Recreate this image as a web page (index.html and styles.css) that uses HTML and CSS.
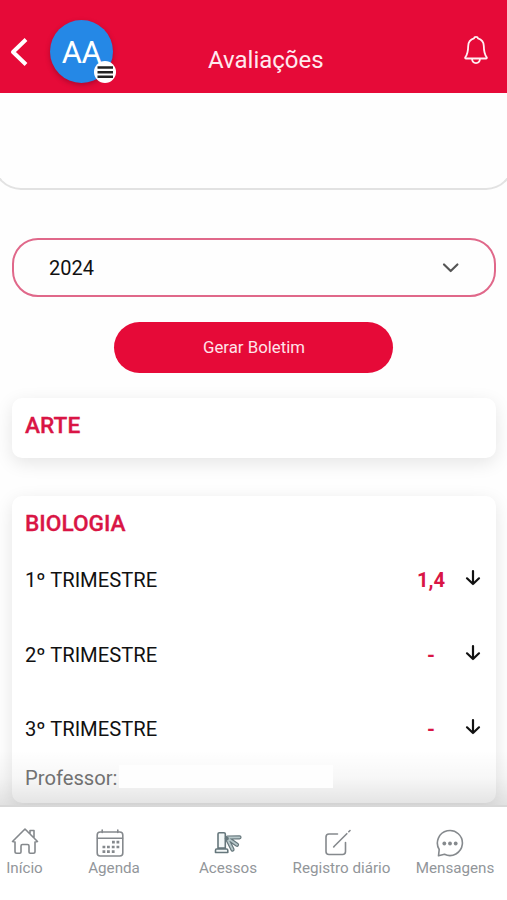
FILE: index.html
```html
<!DOCTYPE html>
<html lang="pt-BR">
<head>
<meta charset="utf-8">
<meta name="viewport" content="width=device-width, initial-scale=1">
<title>Avaliações</title>
<link rel="stylesheet" href="styles.css">
</head>
<body>
<div class="app">
  <header class="header">
    <svg class="back" width="20" height="32" viewBox="0 0 20 32"><path d="M18 3.500L5 16L18 28.500"/></svg>
    <div class="avatar">AA
      <svg class="menu" width="22" height="22" viewBox="0 0 22 22"><circle cx="11" cy="11" r="11"/><path d="M3.500 6.500h15.500M3.500 11.200h15.500M3.500 15.800h15.500"/></svg>
    </div>
    <h1 class="title">Avaliações</h1>
    <svg class="bell" width="26" height="30" viewBox="0 0 26 30"><path d="M13 1.800C11.900 1.800 11.100 2.500 11 3.400C7.500 4.400 5.300 7.300 5.200 11C5.100 17 4.400 19.600 2.300 22.200C1.800 22.900 2.200 23.500 3 23.500H23C23.800 23.500 24.200 22.900 23.700 22.200C21.600 19.600 20.900 17 20.800 11C20.700 7.300 18.500 4.400 15 3.400C14.900 2.500 14.100 1.800 13 1.800ZM9 23.800C9.300 29.500 16.700 29.500 17 23.800"/></svg>
  </header>
  <main class="content">
    <section class="student"></section>
    <div class="select">
      <span>2024</span>
      <svg width="18" height="12" viewBox="0 0 18 12"><path d="M3 2.500L9.700 9L16.400 2.500"/></svg>
    </div>
    <button class="report">Gerar Boletim</button>
    <section class="card card-short"><h2>ARTE</h2></section>
    <section class="card card-long">
      <h2>BIOLOGIA</h2>
      <div class="term"><span>1º TRIMESTRE</span><b>1,4</b><svg width="16" height="18" viewBox="0 0 16 18"><path d="M8 2V15M2 9.300L8 15L14 9.300"/></svg></div>
      <div class="term"><span>2º TRIMESTRE</span><b>-</b><svg width="16" height="18" viewBox="0 0 16 18"><path d="M8 2V15M2 9.300L8 15L14 9.300"/></svg></div>
      <div class="term"><span>3º TRIMESTRE</span><b>-</b><svg width="16" height="18" viewBox="0 0 16 18"><path d="M8 2V15M2 9.300L8 15L14 9.300"/></svg></div>
      <div class="teacher"><span>Professor:</span><i class="teacher-name"></i></div>
    </section>
  </main>
  <nav class="nav">
    <a class="tab"><svg width="28" height="30" viewBox="0 0 28 30"><path d="M1.500 14.500L14 2L26.500 14.500L24 15V24.500Q24 26.200 22.300 26.200H19.200Q18 26.200 18 25V19Q18 17.500 16.500 17.500H11.500Q10 17.500 10 19V25Q10 26.200 8.800 26.200H5.700Q4 26.200 4 24.500V15ZM19 7V3.500H23V11"/></svg><span>Início</span></a>
    <a class="tab tab-agenda"><svg width="28" height="30" viewBox="0 0 28 30"><rect x="1.200" y="5" width="25.600" height="24" rx="3"/><path d="M1.500 11.200H26.500M6.200 3V5.500M21.800 3V5.500"/><path class="dots" d="M16 15.200h2.800M20.500 15.200h2.800M6.500 20h2.800M11 20h2.800M15.800 20h2.800M20.500 20h2.800M6.500 24.700h2.800M11 24.700h2.800M15.800 24.700h2.800"/></svg><span>Agenda</span></a>
    <a class="tab tab-access"><svg width="28" height="30" viewBox="0 0 28 30"><path class="turnstile" d="M4 21V7Q4 5.700 5.300 5.700H10Q11.300 5.700 11.300 7V21ZM2.500 22H12.500Q13.800 22 13.800 23.500V25.500H1.500V23.500Q1.500 22 2.500 22Z"/><path class="arm-edge" d="M13.500 10.500L25.500 10.300M14 11.500L23 17.800M13.500 12.500L18.500 22.500"/><path class="arm" d="M13.500 10.500L25.500 10.300M14 11.500L23 17.800M13.500 12.500L18.500 22.500"/><circle class="hub" cx="12.800" cy="11.500" r="2"/></svg><span>Acessos</span></a>
    <a class="tab tab-log"><svg width="28" height="30" viewBox="0 0 28 30"><path d="M14.500 7H6Q3 7 3 10V24.500Q3 27.500 6 27.500H19.500Q22.500 27.500 22.500 24.500V15.500M11.500 19L23.800 6.700M11.500 19L10.700 20M25.800 4.700L27 3.500"/></svg><span>Registro diário</span></a>
    <a class="tab tab-chat"><svg width="28" height="30" viewBox="0 0 28 30"><path d="M2.500 28.800L3.200 22.500A12.500 12.500 0 1 1 8.500 27.300Z"/><circle class="dot" cx="8.300" cy="16.500" r="1.900"/><circle class="dot" cx="14" cy="16.500" r="1.900"/><circle class="dot" cx="19.700" cy="16.500" r="1.900"/></svg><span>Mensagens</span></a>
  </nav>
</div>
</body>
</html>
```
FILE: styles.css
```css
* { box-sizing: border-box; }
body { margin: 0; background: #fefefe; font-family: Roboto, "Liberation Sans", sans-serif; color: #111; }
svg { display: block; flex: none; fill: none; stroke-linecap: round; stroke-linejoin: round; }
.app { display: flex; flex-direction: column; height: 900px; overflow: hidden; }

.header { flex: none; height: 93px; padding: 10px 18px 0 8px; display: flex; align-items: center; background: #e60a38; }
.back { stroke: #fff; stroke-width: 4; stroke-linecap: butt; }
.avatar { position: relative; flex: none; width: 63px; height: 63px; margin-left: 22px; padding-top: 1px; border-radius: 50%; background: #2588e6; color: #fff; font-size: 31px; line-height: 63px; text-align: center; box-shadow: 0 2px 5px rgba(90, 0, 30, .4); letter-spacing: -.5px; }
.menu { position: absolute; left: 44px; top: 41px; stroke: #222; stroke-width: 2.4; stroke-linecap: butt; }
.menu circle { fill: #fff; stroke: none; }
.title { margin: 16px 0 0 95px; font-size: 24px; font-weight: 400; line-height: 30px; color: #ffe9ee; }
.bell { margin: 0 0 3px auto; stroke: #fff0f3; stroke-width: 1.8; }

.content { flex: 1; min-height: 0; overflow: hidden; display: flex; flex-direction: column; }
.student { flex: none; height: 97px; margin: 0 -7px; border: 2px solid #e2e2e2; border-top: 0; border-radius: 0 0 28px 28px; }
.select { flex: none; display: flex; align-items: center; justify-content: space-between; height: 59px; margin: 48px 11px 0 12px; padding: 0 35px; border: 2px solid #e0688a; border-radius: 26px; font-size: 20px; }
.select svg { stroke: #555; stroke-width: 2.2; }
.report { flex: none; align-self: center; width: 279px; height: 51px; margin: 25px 0; padding: 0 0 2px 1px; border: 0; border-radius: 26px; background: #e60a38; color: #ffe3e9; font-family: inherit; font-size: 16.8px; }
.card { flex: none; margin: 0 11px 0 12px; padding: 12px 13px; border-radius: 10px; background: #fff; box-shadow: 0 5px 18px rgba(0, 0, 0, .1); }
.card-short { height: 60px; margin-bottom: 38px; }
.card-long { height: 307px; }
.card h2 { margin: 0; font-size: 22.700px; line-height: 31px; font-weight: 500; color: #d91545; -webkit-text-stroke: .3px #d91545; }
.term { display: grid; grid-template-columns: 1fr 60px 16px; align-items: center; height: 24px; margin-bottom: 50.500px; padding-right: 2px; font-size: 20.200px; }
.card h2 + .term { margin-top: 29px; }
.term b { text-align: center; font-weight: 700; color: #d91545; padding-right: 8px; }
.term svg { stroke: #111; stroke-width: 2.2; margin-top: -4px; }
.teacher { display: flex; align-items: center; height: 24px; margin-top: -26px; font-size: 20.200px; color: #757575; }
.teacher-name { position: relative; z-index: 2; width: 214px; height: 23px; margin-left: 2px; margin-top: -3px; background: #fefefe; }

.nav { position: relative; flex: none; display: grid; grid-template-columns: 49px 130px 98px 129px 98px; height: 95px; padding-top: 19px; border-top: 2px solid #d8d8d8; background: #fff; }
.nav::before { content: ""; position: absolute; z-index: 1; left: 0; right: 0; top: -57px; height: 55px; background: linear-gradient(rgba(0, 0, 0, 0), rgba(0, 0, 0, .03) 50%, rgba(0, 0, 0, .11)); }
.tab { display: flex; flex-direction: column; align-items: center; color: #92969a; font-size: 15.200px; line-height: 20px; white-space: nowrap; }
.tab svg { stroke: #85898d; stroke-width: 1.6; margin: 1px 0; }
.tab-agenda svg { margin-right: 9px; }
.tab-log svg { margin-right: 10px; }
.tab-chat svg { margin-right: 10px; }
.tab .dots { stroke-width: 2.7; stroke-linecap: butt; }
.tab .turnstile { stroke: #66777c; fill: #f3f7f7; }
.tab .arm-edge { stroke: #66777c; stroke-width: 4.2; }
.tab .arm { stroke: #b7c8ca; stroke-width: 1.8; }
.tab .hub { fill: #66777c; stroke: none; }
.tab .dot { fill: #85898d; stroke: none; }
```
